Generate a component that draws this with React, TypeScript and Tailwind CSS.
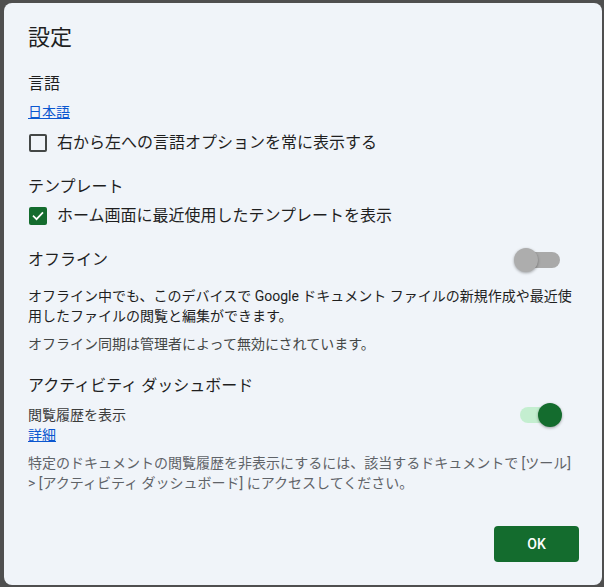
import React from "react";

const font = { fontFamily: 'Roboto, "Noto Sans CJK JP", sans-serif' };

function Checkbox({ checked }: { checked: boolean }) {
  if (checked) {
    return (
      <span className="ml-[1px] flex h-[18px] w-[18px] shrink-0 items-center justify-center rounded-[2px] bg-[#146c2e]">
        <svg width="14" height="14" viewBox="0 0 24 24" fill="none">
          <path d="M4.5 12.5l5 5L19.5 7" stroke="#ffffff" strokeWidth="3" strokeLinecap="square" />
        </svg>
      </span>
    );
  }
  return <span className="ml-[1px] h-[18px] w-[18px] shrink-0 rounded-[2px] border-2 border-[#444746]" />;
}

function Switch({ on }: { on: boolean }) {
  if (on) {
    return (
      <span className="relative mr-[17px] block h-6 w-[42px] shrink-0">
        <span className="absolute left-0 right-[6px] top-[4px] h-4 rounded-full bg-[#c4eed0]" />
        <span className="absolute right-0 top-0 h-6 w-6 rounded-full bg-[#146c2e] shadow-[0_1px_3px_rgba(0,0,0,0.35)]" />
      </span>
    );
  }
  return (
    <span className="relative mr-[19px] block h-6 w-[46px] shrink-0">
      <span className="absolute left-[6px] right-0 top-[4px] h-4 rounded-full bg-[#a9a9a9]" />
      <span className="absolute left-0 top-0 h-6 w-6 rounded-full bg-[#adadad] shadow-[0_1px_3px_rgba(0,0,0,0.35)]" />
    </span>
  );
}

export default function App() {
  return (
    <div className="h-[587px] w-[604px] overflow-hidden bg-[#4f4f4f] pl-[4px] pt-[3px]" style={font}>
      <div className="flex h-[582px] w-[598px] flex-col rounded-[8px] bg-[#f0f4f9] pl-6 pr-[23px] pt-[21px] text-[#1f1f1f]">
        <h1 className="text-[22px] leading-[28px] text-[#1f1f1f]">設定</h1>

        <h2 className="mt-[20px] text-[16px] leading-6">言語</h2>
        <a className="mt-[6px] self-start text-[14px] leading-5 text-[#0b57d0] underline">日本語</a>
        <label className="mt-[9px] flex h-6 items-center gap-[10px]">
          <Checkbox checked={false} />
          <span className="text-[16px] leading-6">右から左への言語オプションを常に表示する</span>
        </label>

        <h2 className="mt-[20px] text-[16px] leading-6">テンプレート</h2>
        <label className="mt-[5px] flex h-6 items-center gap-[10px]">
          <Checkbox checked />
          <span className="text-[16px] leading-6">ホーム画面に最近使用したテンプレートを表示</span>
        </label>

        <div className="mt-[20px] flex h-6 items-center justify-between">
          <h2 className="text-[16px] leading-6">オフライン</h2>
          <Switch on={false} />
        </div>
        <p className="mt-[14px] text-[14px] leading-5 text-[#1f1f1f]">
          オフライン中でも、このデバイスで Google ドキュメント ファイルの新規作成や最近使
          <br />
          用したファイルの閲覧と編集ができます。
        </p>
        <p className="mt-[8px] text-[14px] leading-5 text-[#444746]">オフライン同期は管理者によって無効にされています。</p>

        <h2 className="mt-[20px] text-[16px] leading-6">アクティビティ ダッシュボード</h2>
        <div className="mt-[7px] flex h-5 items-center justify-between">
          <span className="text-[14px] leading-5 text-[#3c3c3c]">閲覧履歴を表示</span>
          <span className="-my-0.5">
            <Switch on />
          </span>
        </div>
        <a className="self-start text-[14px] leading-5 text-[#0b57d0] underline">詳細</a>
        <p className="mt-[8px] text-[14px] leading-5 text-[#5f6368]">
          特定のドキュメントの閲覧履歴を非表示にするには、該当するドキュメントで [ツール]
          <br />
          &gt; [アクティビティ ダッシュボード] にアクセスしてください。
        </p>

        <div className="mt-[33px] flex justify-end">
          <button className="h-9 w-[85px] rounded-[4px] bg-[#146c2e] text-[14px] font-medium text-white">OK</button>
        </div>
      </div>
    </div>
  );
}
